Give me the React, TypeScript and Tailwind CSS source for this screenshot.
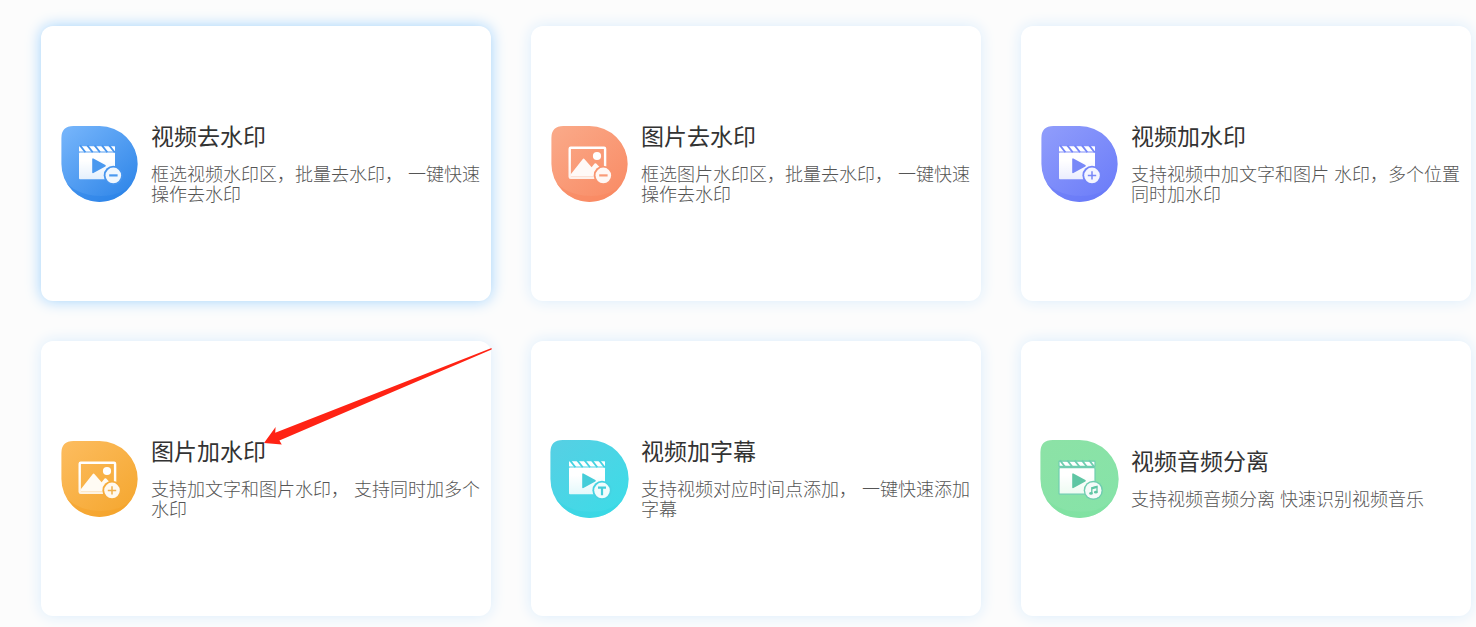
import clsx from 'clsx'

type Tone = {
  from: string
  to: string
  base: string
  ring: string
  mark: string
}

type Badge = 'minus' | 'plus' | 'text' | 'music'

type Tool = {
  id: string
  title: string
  description: string
  glyph: 'video' | 'image'
  badge: Badge
  tone: Tone
  large?: boolean
  active?: boolean
  pointed?: boolean
}

const tools: Tool[] = [
  {
    id: 'video-remove',
    title: '视频去水印',
    description: '框选视频水印区，批量去水印， 一键快速操作去水印',
    glyph: 'video',
    badge: 'minus',
    tone: { from: '#73b3fa', to: '#3187e9', base: '#2781e6', ring: '#4795ee', mark: '#4b99ef' },
    active: true,
  },
  {
    id: 'image-remove',
    title: '图片去水印',
    description: '框选图片水印区，批量去水印， 一键快速操作去水印',
    glyph: 'image',
    badge: 'minus',
    tone: { from: '#faa887', to: '#f98d67', base: '#f8855e', ring: '#f9946f', mark: '#f99a77' },
  },
  {
    id: 'video-add',
    title: '视频加水印',
    description: '支持视频中加文字和图片 水印，多个位置同时加水印',
    glyph: 'video',
    badge: 'plus',
    tone: { from: '#8e9bfb', to: '#6d7ef9', base: '#6375f6', ring: '#7485f9', mark: '#7888f8' },
  },
  {
    id: 'image-add',
    title: '图片加水印',
    description: '支持加文字和图片水印， 支持同时加多个水印',
    glyph: 'image',
    badge: 'plus',
    tone: { from: '#fcbb5c', to: '#f5a832', base: '#f3a026', ring: '#f6ac3c', mark: '#f0b04c' },
    pointed: true,
  },
  {
    id: 'video-subtitle',
    title: '视频加字幕',
    description: '支持视频对应时间点添加， 一键快速添加字幕',
    glyph: 'video',
    badge: 'text',
    tone: { from: '#55d0e4', to: '#3edbe7', base: '#33d4e2', ring: '#45d3e2', mark: '#45cdd9' },
    large: true,
  },
  {
    id: 'audio-split',
    title: '视频音频分离',
    description: '支持视频音频分离 快速识别视频音乐',
    glyph: 'video',
    badge: 'music',
    tone: { from: '#8ce2a6', to: '#86e3a8', base: '#7adf9e', ring: '#6fcdb0', mark: '#5fc6a4' },
    large: true,
  },
]

function VideoGlyph({ id, tone, outlined }: { id: string; tone: Tone; outlined: boolean }) {
  return (
    <g>
      <g stroke={outlined ? tone.ring : 'none'} strokeWidth="1.2">
        <rect x="18" y="21.2" width="36" height="5.2" rx="0.6" fill="#fff" />
        <rect x="18" y="27.6" width="36" height="26.6" rx="1" fill={`url(#${id}-glyph)`} />
      </g>
      <g stroke={tone.ring} strokeWidth="1.8">
        <path d="M19 20.4l5.4 6.8M26.3 20.4l5.4 6.8M33.6 20.4l5.4 6.8M40.9 20.4l5.4 6.8M48.2 20.4l5.4 6.8" />
      </g>
      <path
        d="M32 34.2v13.2l12-6.6z"
        fill={tone.mark}
        stroke={tone.mark}
        strokeWidth="1.6"
        strokeLinejoin="round"
      />
    </g>
  )
}

function ImageGlyph({ id }: { id: string }) {
  return (
    <g>
      <rect
        x="18.7"
        y="22.7"
        width="35.4"
        height="30"
        rx="1"
        fill="none"
        stroke={`url(#${id}-glyph)`}
        strokeWidth="2.4"
      />
      <path d="M19.6 51.6v-2L31.6 34.2q1-1.2 2 0l7 8 3-3.6q.8-.8 1.6 0l8 8.4v4.6z" fill="#fff" fillOpacity="0.94" />
      <circle cx="46" cy="31" r="4.1" fill="#fff" />
    </g>
  )
}

function BadgeMark({ badge, tone }: { badge: Badge; tone: Tone }) {
  const cx = badge === 'minus' || badge === 'music' ? 52.3 : 51
  return (
    <g>
      <circle cx={cx} cy="50.4" r={badge === 'music' ? 9.6 : 9.6} fill={tone.ring} />
      <circle cx={cx} cy="50.4" r={badge === 'music' ? 8.2 : 7.8} fill="#fff" fillOpacity="0.92" />
      {badge === 'minus' && <path d="M48.2 50.4h8.4" stroke={tone.mark} strokeWidth="2.2" />}
      {badge === 'plus' && <path d="M46.8 50.4h8.4M51 46.2v8.4" stroke={tone.mark} strokeWidth="1.5" />}
      {badge === 'text' && <path d="M47 47.6h8M51 47.6v7.6" stroke={tone.mark} strokeWidth="2.2" />}
      {badge === 'music' && (
        <g fill={tone.mark}>
          <ellipse cx="50" cy="53.4" rx="1.8" ry="1.4" />
          <ellipse cx="54.8" cy="52.2" rx="1.8" ry="1.4" />
          <path d="M50.8 53.4v-5.6l5.2-1.4v5.8" fill="none" stroke={tone.mark} strokeWidth="1.3" />
          <path d="M50.6 47.4l5.6-1.5v2l-5.6 1.5z" />
        </g>
      )}
    </g>
  )
}

function ToolIcon({ tool }: { tool: Tool }) {
  const { id, tone } = tool
  return (
    <svg aria-hidden className="h-[77px] w-[78px] shrink-0 overflow-visible" viewBox="0 0 78 77">
      <defs>
        <linearGradient id={`${id}-bg`} x1="0.1" y1="0.05" x2="0.85" y2="0.9">
          <stop offset="0" stopColor={tone.from} />
          <stop offset="1" stopColor={tone.to} />
        </linearGradient>
        <linearGradient id={`${id}-glyph`} x1="0" y1="0" x2="0" y2="1">
          <stop offset="0.3" stopColor="#fff" />
          <stop offset="1" stopColor="#fff" stopOpacity="0.85" />
        </linearGradient>
        <clipPath id={`${id}-clip`}>
          <path d="M0.4 13Q0.4 1 12.4 1H38.5A38.2 38 0 0 1 38.5 77A38.2 38 0 0 1 0.4 39Z" />
        </clipPath>
      </defs>
      <g transform={tool.large ? 'translate(-1 -1) scale(1.026)' : undefined}>
        <g clipPath={`url(#${id}-clip)`}>
          <rect width="78" height="78" fill={`url(#${id}-bg)`} />
          <path d="M0 52Q14 71 40 71T78 50V78H0Z" fill={tone.base} fillOpacity="0.45" />
        </g>
      </g>
      {tool.glyph === 'video' ? (
        <VideoGlyph id={id} tone={tone} outlined={tool.badge === 'music'} />
      ) : (
        <ImageGlyph id={id} />
      )}
      <BadgeMark badge={tool.badge} tone={tone} />
    </svg>
  )
}

function PointerArrow() {
  return (
    <svg
      aria-hidden
      className="pointer-events-none absolute -right-px top-[7px] h-[97px] w-[228px]"
      viewBox="0 0 228 97"
    >
      <path d="M0 95L11.6 79L11.2 84.8L227.6 0V1.6L15.4 92.4L17.8 96.4Z" fill="#ff2314" />
    </svg>
  )
}

function ToolCard({ tool }: { tool: Tool }) {
  return (
    <a
      href={`#${tool.id}`}
      className={clsx(
        'relative flex min-h-[275px] items-center gap-3 rounded-xl bg-white pl-5',
        tool.active ? 'shadow-[0_0_15px_#9fd2fd]' : 'shadow-[0_0_15px_#d9ecfc]',
      )}
    >
      <ToolIcon tool={tool} />
      <div className="min-w-0 flex-1">
        <h3 className="mb-3 text-[23px] leading-[31px] text-[#333333]">{tool.title}</h3>
        <p className="text-[18px] leading-5 font-light text-[#555555]">{tool.description}</p>
      </div>
      {tool.pointed && <PointerArrow />}
    </a>
  )
}

export default function App() {
  return (
    <main
      lang="zh-CN"
      className="grid min-h-screen grid-cols-3 content-start gap-10 bg-[#fcfcfc] pt-[26px] pr-[5px] pb-[11px] pl-[41px] font-['Liberation_Sans','Noto_Sans_CJK_SC',sans-serif]"
    >
      {tools.map((tool) => (
        <ToolCard key={tool.id} tool={tool} />
      ))}
    </main>
  )
}
